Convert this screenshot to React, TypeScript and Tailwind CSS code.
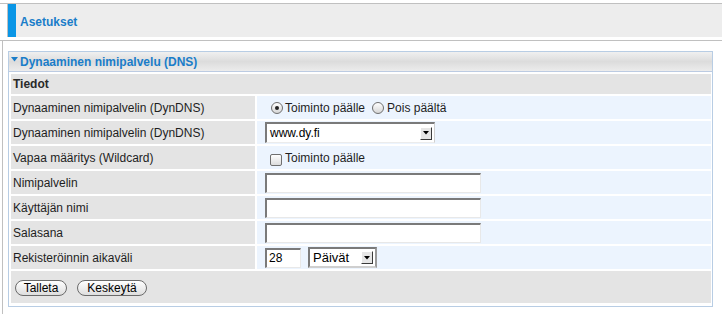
import React from "react";

function Radio({ checked }: { checked?: boolean }) {
  return (
    <span className="w-[12px] h-[12px] rounded-full border border-[#6f6f6f] bg-linear-to-b from-[#ffffff] to-[#d6d6d6] flex items-center justify-center shrink-0">
      {checked ? <span className="w-[4px] h-[4px] rounded-full bg-[#222]" /> : null}
    </span>
  );
}

function Arrow() {
  return (
    <span className="w-[12px] h-[13px] bg-[#e6e6e6] border-t border-l border-t-white border-l-white border-r border-b border-r-[#3a3a3a] border-b-[#3a3a3a] flex items-center justify-center shrink-0">
      <svg width="6" height="4" viewBox="0 0 6 4">
        <polygon points="0,0 6,0 3,3.5" fill="#000" />
      </svg>
    </span>
  );
}

function TextInput({ w, value }: { w: string; value?: string }) {
  return (
    <div
      className={`${w} h-[20px] bg-white border-t-2 border-l-2 border-t-[#7a7a7a] border-l-[#7a7a7a] border-r border-b border-r-[#e8e8e8] border-b-[#e8e8e8] flex items-center pl-[2px] text-[12px] text-black`}
    >
      {value}
    </div>
  );
}

function Row({ label, children }: { label: string; children?: React.ReactNode }) {
  return (
    <div className="flex h-[23px] gap-[2px]">
      <div className="w-[244px] bg-[#e4e4e4] pl-[2px] flex items-center text-[#1e1e1e]">{label}</div>
      <div className="flex-1 bg-[#ecf4fe] pl-[8px] flex items-center">{children}</div>
    </div>
  );
}

export default function App() {
  return (
    <div className="w-[722px] h-[314px] bg-white overflow-hidden text-[12px] leading-none text-[#1e1e1e] font-['Liberation_Sans',Arial,sans-serif]">
      <div className="h-[3px]" />
      <div className="border-t border-[#c0c0c0]">
        <div className="ml-[7px] h-[33px] border-l border-[#c0c0c0] bg-[#ededed] flex">
          <div className="w-[8px] bg-[#0a96e6]" />
          <div className="pl-[4px] pt-[3px] flex items-center font-bold text-[#1a7dc9]">Asetukset</div>
        </div>
      </div>
      <div className="h-[3px]" />
      <div className="border-t border-[#c0c0c0] h-[274px]">
        <div className="ml-[2px] border-l border-[#c0c0c0] h-full pt-[10px] pl-[5px]">
          <div className="w-[705px] border border-[#b8cde4]">
            <div className="h-[20px] border-b border-[#bccbe2] bg-linear-to-b from-[#f0f0f0] via-[#dcdcdc] to-[#ececec] flex items-center pl-[2px] font-bold text-[#1a7dc9]">
              <svg width="7" height="5" viewBox="0 0 7 5" className="mr-[2px] -mt-[4px]">
                <polygon points="0,0 7,0 3.5,4.5" fill="#1a7dc9" />
              </svg>
              Dynaaminen nimipalvelu (DNS)
            </div>
            <div className="pl-[2px] pr-[1px] pt-[2px] pb-[3px] flex flex-col gap-[2px]">
              <div className="h-[20px] bg-[#e4e4e4] pl-[2px] flex items-center font-bold text-[#2a2a2a]">Tiedot</div>
              <Row label="Dynaaminen nimipalvelin (DynDNS)">
                <span className="ml-[6px]">
                  <Radio checked />
                </span>
                <span className="ml-[2px]">Toiminto päälle</span>
                <span className="ml-[7px]">
                  <Radio />
                </span>
                <span className="ml-[3px]">Pois päältä</span>
              </Row>
              <Row label="Dynaaminen nimipalvelin (DynDNS)">
                <div className="w-[170px] h-[21px] bg-white border-t-2 border-l-2 border-t-[#7a7a7a] border-l-[#7a7a7a] border-r border-b border-r-[#cfcfcf] border-b-[#ececec] flex items-center justify-between pl-[3px] pr-[2px] text-black">
                  <span>www.dy.fi</span>
                  <Arrow />
                </div>
              </Row>
              <Row label="Vapaa määritys (Wildcard)">
                <span className="ml-[5px] mt-[4px] w-[12px] h-[12px] rounded-[2px] border border-[#6f6f6f] bg-linear-to-b from-[#ffffff] to-[#dcdcdc] shrink-0" />
                <span className="ml-[3px]">Toiminto päälle</span>
              </Row>
              <Row label="Nimipalvelin">
                <TextInput w="w-[216px]" />
              </Row>
              <Row label="Käyttäjän nimi">
                <TextInput w="w-[216px]" />
              </Row>
              <Row label="Salasana">
                <TextInput w="w-[216px]" />
              </Row>
              <Row label="Rekisteröinnin aikaväli">
                <TextInput w="w-[36px]" value="28" />
                <div className="ml-[7px] w-[69px] h-[21px] bg-white border-t-2 border-l-2 border-t-[#7a7a7a] border-l-[#7a7a7a] border-r-2 border-b-2 border-r-[#9a9a9a] border-b-[#cfcfcf] flex items-center justify-between pl-[3px] pr-[2px] text-[13px] text-black">
                  <span>Päivät</span>
                  <Arrow />
                </div>
              </Row>
              <div className="h-[32px] bg-[#e4e4e4] flex items-center pl-[4px] gap-[10px] pt-[1px]">
                <button className="w-[52px] h-[16px] rounded-full border border-[#6a6a6a] bg-linear-to-b from-[#ffffff] to-[#dedede] text-[12px] leading-none text-black flex items-center justify-center">
                  Talleta
                </button>
                <button className="w-[70px] h-[16px] rounded-full border border-[#6a6a6a] bg-linear-to-b from-[#ffffff] to-[#dedede] text-[12px] leading-none text-black flex items-center justify-center">
                  Keskeytä
                </button>
              </div>
            </div>
          </div>
        </div>
      </div>
    </div>
  );
}
